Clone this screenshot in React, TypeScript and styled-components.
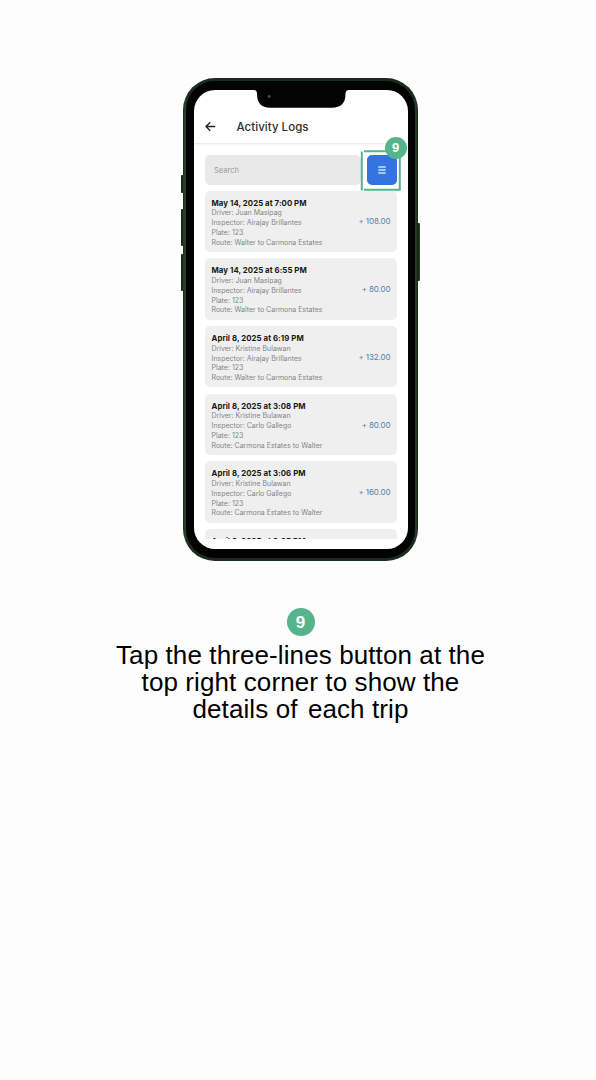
import React from "react";
import styled, { createGlobalStyle } from "styled-components";

const GlobalStyle = createGlobalStyle`
  * { box-sizing: border-box; }
  body { margin: 0; background: #fdfdfd; }
`;

const uiFont = `Inter, "Liberation Sans", sans-serif`;
const green = "#56b48c";

const Page = styled.main`
  min-height: 1080px;
  padding: 78px 0 0 5px;
  display: flex;
  flex-direction: column;
  align-items: center;
  background: #fdfdfd;
`;

const Phone = styled.div`
  position: relative;
  width: 235px;
  height: 482.5px;
  padding: 2.5px 3px;
  border-radius: 32px;
  background: linear-gradient(90deg, #192719 0, #2c432b 2px, #1c2c1c 4px, #1c2c1c 231px, #2b422a 233px, #172417 235px);
`;

const SideKey = styled.span<{ $side: "left" | "right"; $top: number; $height: number }>`
  position: absolute;
  ${({ $side }) => $side}: -2px;
  top: ${({ $top }) => $top}px;
  width: 3px;
  height: ${({ $height }) => $height}px;
  border-radius: 1px;
  background: linear-gradient(90deg, #101b10, #2b422a);
`;

const Bezel = styled.div`
  height: 100%;
  padding: 9px 7.5px 8.8px;
  border-radius: 29px;
  background: #030303;
`;

const Screen = styled.div`
  position: relative;
  height: 100%;
  display: flex;
  flex-direction: column;
  overflow: hidden;
  border-radius: 21px;
  background: #fff;
  font-family: ${uiFont};
`;

const NotchArt = styled.svg`
  position: absolute;
  left: 60px;
  top: 0;
  width: 96px;
  height: 18px;
`;

const AppBar = styled.header`
  height: 54px;
  flex: none;
  display: flex;
  align-items: flex-end;
  gap: 21px;
  padding: 0 11px 8.5px;
  border-bottom: 1px solid #ececec;
  box-shadow: 0 1px 2px rgba(0, 0, 0, 0.05);
`;

const BackIcon = styled.svg`
  width: 11px;
  height: 11px;
  margin-bottom: 2.5px;
`;

const Title = styled.h1`
  margin: 0;
  font-size: 11.5px;
  line-height: 14px;
  font-weight: 500;
  letter-spacing: 0.03px;
  color: #2e2e2e;
`;

const Toolbar = styled.div`
  flex: none;
  display: flex;
  gap: 6px;
  margin: 11px 11px 6px 11.5px;
`;

const SearchField = styled.div`
  flex: 1;
  height: 30px;
  display: flex;
  align-items: center;
  padding: 1px 0 0 9px;
  border-radius: 5px;
  background: #e9e9e9;
  font-size: 7.5px;
  color: #999;
`;

const MenuButton = styled.button`
  width: 30px;
  height: 30px;
  display: grid;
  place-items: center;
  padding: 0;
  border: 0;
  border-radius: 5px;
  background: #3573e0;
`;

const List = styled.div`
  flex: none;
  height: 348.3px;
  margin: 0 11px 0 11.5px;
  display: flex;
  flex-direction: column;
  gap: 6.2px;
  overflow: hidden;
`;

const Card = styled.article`
  flex: none;
  height: 61.5px;
  display: flex;
  justify-content: space-between;
  padding: 7.2px 6px 0 6.5px;
  border-radius: 5px;
  background: #efefef;
`;

const CardTitle = styled.h2`
  margin: 0;
  padding-bottom: 0.3px;
  font-size: 7.8px;
  line-height: 10.4px;
  font-weight: 700;
  letter-spacing: 0.07px;
  color: #161616;
  white-space: nowrap;
`;

const Detail = styled.p`
  margin: 0;
  font-size: 7px;
  line-height: 9.75px;
  color: #858585;
  white-space: nowrap;
`;

const Amount = styled.span`
  padding-top: 18.8px;
  font-size: 8px;
  line-height: 10px;
  letter-spacing: -0.1px;
  color: #4f82b0;
  white-space: nowrap;
`;

const HighlightArt = styled.svg`
  position: absolute;
  left: 177px;
  top: 57px;
  width: 47px;
  height: 58px;
`;

const Badge = styled.span<{ $size: number; $font: number }>`
  display: grid;
  place-items: center;
  width: ${({ $size }) => $size}px;
  height: ${({ $size }) => $size}px;
  border-radius: 50%;
  background: ${green};
  color: #fff;
  font: 700 ${({ $font }) => $font}px/1 "Liberation Sans", Arial, sans-serif;
`;

const PinnedBadge = styled(Badge)`
  position: absolute;
  left: 201.5px;
  top: 58.7px;
`;

const Step = styled.section`
  display: flex;
  flex-direction: column;
  align-items: center;
  padding-top: 47.5px;
`;

const Caption = styled.p`
  margin: 6px 0 0;
  font: 26px/27px "Liberation Sans", Arial, sans-serif;
  letter-spacing: 0.1px;
  text-align: center;
  color: #000;
`;

const WideSpace = styled.span`
  margin-left: 3px;
`;

interface Trip {
  date: string;
  driver: string;
  inspector: string;
  route: string;
  amount: string;
}

const outbound = "Walter to Carmona Estates";
const inbound = "Carmona Estates to Walter";

const trips: Trip[] = [
  { date: "May 14, 2025 at 7:00 PM", driver: "Juan Masipag", inspector: "Airajay Brillantes", route: outbound, amount: "108.00" },
  { date: "May 14, 2025 at 6:55 PM", driver: "Juan Masipag", inspector: "Airajay Brillantes", route: outbound, amount: "80.00" },
  { date: "April 8, 2025 at 6:19 PM", driver: "Kristine Bulawan", inspector: "Airajay Brillantes", route: outbound, amount: "132.00" },
  { date: "April 8, 2025 at 3:08 PM", driver: "Kristine Bulawan", inspector: "Carlo Gallego", route: inbound, amount: "80.00" },
  { date: "April 8, 2025 at 3:06 PM", driver: "Kristine Bulawan", inspector: "Carlo Gallego", route: inbound, amount: "160.00" },
];

function TripCard({ trip }: { trip: Trip }) {
  return (
    <Card>
      <div>
        <CardTitle>{trip.date}</CardTitle>
        <Detail>Driver: {trip.driver}</Detail>
        <Detail>Inspector: {trip.inspector}</Detail>
        <Detail>Plate: 123</Detail>
        <Detail>Route: {trip.route}</Detail>
      </div>
      <Amount>+ {trip.amount}</Amount>
    </Card>
  );
}

export default function App() {
  return (
    <Page>
      <GlobalStyle />
      <Phone>
        <SideKey $side="left" $top={97} $height={18} />
        <SideKey $side="left" $top={131} $height={37} />
        <SideKey $side="left" $top={176} $height={37} />
        <SideKey $side="right" $top={145} $height={58} />
        <Bezel>
          <Screen>
            <NotchArt viewBox="60 0 96 18">
              <path d="M60 0H155Q151.5 0 151.5 4Q151.5 17.7 138 17.7H76Q63 17.7 63 4Q63 0 60 0Z" fill="#030303" />
              <circle cx="75.2" cy="6.5" r="1.4" fill="#3f536b" />
            </NotchArt>
            <AppBar>
              <BackIcon viewBox="0 0 11 11" fill="none" stroke="#222" strokeWidth="1.3">
                <path d="M10.3 5.5H1M5.3 1.2L1 5.5L5.3 9.8" />
              </BackIcon>
              <Title>Activity Logs</Title>
            </AppBar>
            <Toolbar>
              <SearchField>Search</SearchField>
              <MenuButton aria-label="Details">
                <svg width="8" height="8" viewBox="0 0 8 8" stroke="#cfe6ee" strokeWidth="1.4">
                  <path d="M.3 1H7.7M.3 4H7.7M.3 7H7.7" />
                </svg>
              </MenuButton>
            </Toolbar>
            <List>
              {trips.map((trip) => (
                <TripCard key={trip.date} trip={trip} />
              ))}
              <Card>
                <CardTitle>April 8, 2025 at 3:05 PM</CardTitle>
              </Card>
            </List>
          </Screen>
        </Bezel>
        <HighlightArt viewBox="177 57 47 58" fill="none" stroke={green} strokeWidth="2">
          <path d="M178.8 73.5V112.5M181 73.2H216.8V111.8H181" />
        </HighlightArt>
        <PinnedBadge $size={22} $font={13}>9</PinnedBadge>
      </Phone>
      <Step>
        <Badge $size={28} $font={17}>9</Badge>
        <Caption>
          Tap the three-lines button at the
          <br />
          top right corner to show the
          <br />
          details of <WideSpace>each trip</WideSpace>
        </Caption>
      </Step>
    </Page>
  );
}
